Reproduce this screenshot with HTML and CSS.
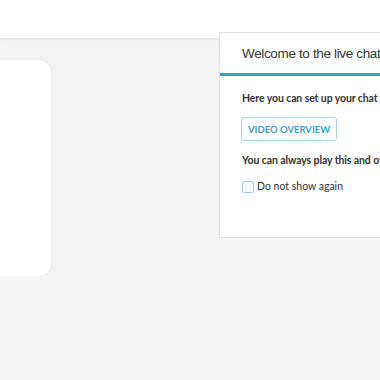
FILE: index.html
```html
<!DOCTYPE html>
<html lang="en">

<head>
	<meta charset="UTF-8">
	<meta name="viewport" content="width=device-width, initial-scale=1.0">
	<title>Live chat</title>
	<link rel="stylesheet" href="styles.css">
</head>

<body>
	<div class="topbar"></div>
	<div class="content">
		<div class="card"></div>
	</div>

	<div class="welcome">
		<div class="welcome-header">Welcome to the live chat</div>
		<div class="welcome-body">
			<p>Here you can set up your chat widget and start talking to your visitors.</p>
			<button class="btn-outline">VIDEO OVERVIEW</button>
			<p>You can always play this and other videos from the help menu.</p>
			<label class="check">
				<span class="box"></span>
				Do not show again
			</label>
		</div>
	</div>
</body>

</html>
```

FILE: styles.css
```css
:root {
	--bg: #f4f4f4;
	--blue: #2fa6c8;
	--blue-light: #a9d6e5;
	--text: #333333;
	--border: #e2e2e2;
}

* {
	box-sizing: border-box;
}

body {
	padding: 0;
	margin: 0;
	background: var(--bg);
	font-family: 'Lato', sans-serif;
	color: var(--text);
	overflow: hidden;
}

.topbar {
	height: 38px;
	background: white;
	box-shadow: 0 1px 3px rgba(0, 0, 0, 0.08);
}

.content {
	padding-top: 22px;
}

.card {
	width: 300px;
	height: 216px;
	margin-left: -249px;
	background: white;
	border-radius: 12px;
	box-shadow: 0 0 3px rgba(0, 0, 0, 0.1);
}

/* popup over the page */
.welcome {
	position: absolute;
	top: 32px;
	left: 219px;
	width: 240px;
	height: 206px;
	background: white;
	border: 1px solid var(--border);
	overflow: hidden;
}

.welcome-header {
	height: 43px;
	padding: 13px 0 0 22px;
	border-bottom: 3px solid var(--blue);
	font-family: 'Liberation Sans', sans-serif;
	font-size: 13.5px;
	letter-spacing: -0.35px;
	white-space: nowrap;
}

.welcome-body {
	padding: 15px 0 0 22px;
	font-size: 10.5px;
	font-weight: 700;
	letter-spacing: -0.1px;
	white-space: nowrap;
}

.welcome-body p {
	margin: 0;
	line-height: 15px;
}

.btn-outline {
	display: block;
	margin: 11px 0 12px -1px;
	height: 24px;
	padding: 0 6px;
	background: white;
	border: 1px solid var(--blue-light);
	border-radius: 3px;
	color: #3b9dbf;
	font-family: 'Lato', sans-serif;
	font-size: 9.5px;
	font-weight: 700;
}

.check {
	display: flex;
	align-items: center;
	gap: 3px;
	margin-top: 11px;
	font-size: 10.5px;
	font-weight: 400;
	letter-spacing: 0;
}

.box {
	width: 12px;
	height: 12px;
	margin-top: 2px;
	border: 1px solid #8fc9dc;
	border-radius: 3px;
}
```
